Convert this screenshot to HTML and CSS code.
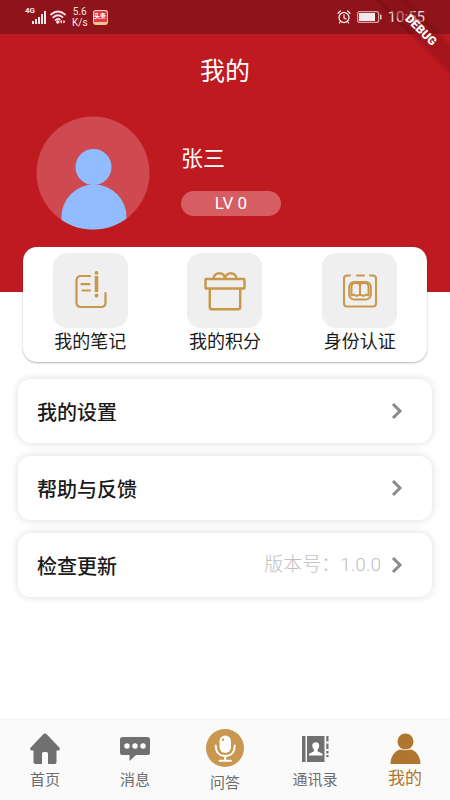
FILE: index.html
```html
<!DOCTYPE html>
<html lang="zh-CN">
<head>
<meta charset="utf-8">
<meta name="viewport" content="width=device-width, initial-scale=1">
<title>我的</title>
<link rel="stylesheet" href="styles.css">
</head>
<body>
<div class="app">
  <div class="status">
    <div class="status-left">
      <svg class="signal" width="22" height="16" viewBox="0 0 22 16" fill="currentColor" aria-hidden="true"><path d="M7 12h2v3H7zM10 10h2v5h-2zM13 8h2v7h-2zM16 5h2v10h-2zM19 2h2v13h-2z"/></svg>
      <span class="net">4G</span>
      <svg width="16" height="16" viewBox="0 0 16 16" fill="none" stroke="currentColor" stroke-width="1.8" stroke-linecap="round" aria-hidden="true"><path d="M1 5.500Q8-.5 15 5.500M3.300 8.300Q8 4.200 12.500 8.100M5.600 11Q8 9 9.800 10.600"/><circle cx="7.800" cy="13" r=".8" fill="currentColor"/><path d="M11.500 12l-.8.8.8.8M13.700 12l.8.8-.8.8" stroke-width="1.200"/></svg>
      <span class="speed"><span>5.6</span><span>K/s</span></span>
      <span class="news"><span>头条</span></span>
    </div>
    <div class="status-right">
      <svg width="14" height="14" viewBox="0 0 14 14" fill="none" stroke="currentColor" stroke-width="1.300" stroke-linecap="round" aria-hidden="true"><circle cx="7" cy="7.500" r="5"/><path d="M7 4.800v3l2 1.200M1 3.300L3.400 1M13 3.300L10.600 1M3.400 11.500l-1 1.500M10.600 11.500l1 1.500"/></svg>
      <svg width="25" height="12" viewBox="0 0 25 12" aria-hidden="true"><rect x=".6" y=".6" width="21" height="10.800" rx="2" fill="none" stroke="#d9a3a6" stroke-width="1.200"/><rect x="2" y="2" width="16" height="8" fill="#f5e8e9"/><rect x="23" y="3.500" width="1.600" height="5" rx=".6" fill="#e8c8ca"/></svg>
      <span class="clock">10:55</span>
    </div>
  </div>
  <div class="ribbon">DEBUG</div>

  <header class="hero">
    <h1>我的</h1>
    <div class="profile">
      <svg class="avatar" width="114" height="114" viewBox="0 0 114 114" role="img" aria-label="头像"><defs><clipPath id="disc"><circle cx="57" cy="57" r="56.500"/></clipPath></defs><circle cx="57" cy="57" r="56.500" fill="#cf4a50"/><g clip-path="url(#disc)" fill="#91bcff"><circle cx="57.500" cy="51" r="18"/><path d="M25.500 114V101a32.500 32.500 0 0 1 65 0v13z"/></g></svg>
      <div class="who">
        <div class="name">张三</div>
        <div class="level">LV 0</div>
      </div>
    </div>
  </header>

  <main>
    <nav class="quick">
      <button type="button"><span class="tile"><svg width="40" height="40" viewBox="0 0 40 40" fill="none" stroke="#c9974a" stroke-width="2.200" stroke-linecap="round" aria-hidden="true"><path d="M20 5H11Q6.500 5 6.500 9.500V31.500Q6.500 36 11 36H31Q35.500 36 35.500 31.500V22M11.500 13.200h8M12.500 19.500h7.500"/><path d="M26.500 5v16" stroke-width="3.600" stroke-linecap="butt"/><g fill="#c9974a" stroke="none"><circle cx="26.500" cy="1.900" r="1.900"/><circle cx="26.500" cy="24.500" r="2"/></g></svg></span><span>我的笔记</span></button>
      <button type="button"><span class="tile"><svg width="42" height="40" viewBox="0 0 42 40" fill="none" stroke="#c9974a" stroke-width="2.400" stroke-linejoin="round" aria-hidden="true"><rect x="1.500" y="8" width="39" height="9.500" rx=".5"/><path d="M5.800 17.500v18.700q0 2 2 2h26.400q2 0 2-2V17.500M9.500 8C9.500 4 12.500 2.300 15.300 2.300S20.800 4 21 8C21.200 4 24 2.300 26.700 2.300S32.500 4 32.500 8"/></svg></span><span>我的积分</span></button>
      <button type="button"><span class="tile"><svg width="36" height="36" viewBox="0 0 36 36" fill="none" stroke="#c9974a" stroke-width="2" stroke-linecap="round" aria-hidden="true"><path d="M8 2.500H5Q2 2.500 2 5.500V30.500Q2 33.500 5 33.500H31Q34 33.500 34 30.500V5.500Q34 2.500 31 2.500H28M15 2.500h7"/><rect x="7.200" y="9" width="21.600" height="17.500" rx="5"/><path d="M18 11v11M9.500 22V13.500q0-3.500 3.500-3.500h2q3 0 3 3 0-3 3-3h2q3.500 0 3.500 3.500V22M9.500 22.500l2.500-1 2.500 1.500 3.500-1.500 3.500 1.500 2.500-1.500 2.500 1" stroke-width="2"/></svg></span><span>身份认证</span></button>
    </nav>
    <section class="menu">
      <button type="button"><span class="label">我的设置</span><svg class="chevron" width="12" height="18" viewBox="0 0 12 18" aria-hidden="true"><path d="M2 2l7 7-7 7"/></svg></button>
      <button type="button"><span class="label">帮助与反馈</span><svg class="chevron" width="12" height="18" viewBox="0 0 12 18" aria-hidden="true"><path d="M2 2l7 7-7 7"/></svg></button>
      <button type="button"><span class="label">检查更新</span><span class="version">版本号：1.0.0</span><svg class="chevron" width="12" height="18" viewBox="0 0 12 18" aria-hidden="true"><path d="M2 2l7 7-7 7"/></svg></button>
    </section>
  </main>

  <nav class="tabs">
    <a href="#home"><svg width="32" height="32" viewBox="0 0 32 32" fill="#707070" aria-hidden="true"><path d="M14.300 1.300q1.700-1.500 3.400 0L30.300 14.500q1.600 3-1 3H27.500V29q0 2-2 2H19V20.500q0-1.500-1.500-1.500h-3q-1.500 0-1.500 1.500V31H6.500q-2 0-2-2V17.500H2.700q-2.600 0-1-3z"/></svg><span>首页</span></a>
    <a href="#messages"><svg width="32" height="32" viewBox="0 0 32 32" aria-hidden="true"><path d="M3.500 4h25q2.500 0 2.500 2.500v13q0 2.500-2.500 2.500H17l-6.500 6V22h-7Q1 22 1 19.500v-13Q1 4 3.500 4z" fill="#707070"/><g fill="#fff"><circle cx="8" cy="13" r="2.700"/><circle cx="16" cy="13" r="2.700"/><circle cx="24" cy="13" r="2.700"/></g></svg><span>消息</span></a>
    <a class="ask" href="#ask"><svg width="38" height="38" viewBox="0 0 38 38" aria-hidden="true"><circle cx="19" cy="19" r="19" fill="#c9974f"/><rect x="13.500" y="6.500" width="11.500" height="17.500" rx="5.700" fill="#fff"/><path d="M9.700 16.500c0 7 4 10.500 9.500 10.500s9.500-3.500 9.500-10.500M19.200 27v4.500M13.500 31.700h11.400" fill="none" stroke="#fff" stroke-width="2" stroke-linecap="round"/><circle cx="17" cy="10.800" r="1.200" fill="#c9974f"/></svg><span>问答</span></a>
    <a href="#contacts"><svg width="32" height="32" viewBox="0 0 32 32" aria-hidden="true"><path d="M3 3h3.500v26H3zM8 3h17.500v26H8zM27.300 3H29.500v5.500h-2.200zM27.300 10.500H29.500V16h-2.200zM27.300 18H29.500v2.500h-2.200zM27.300 22H29.500v2h-2.200z" fill="#707070"/><path d="M10 22.500v-1.700l5-2.600v-1.500q-1.700-1.700-1.700-4.200c0-4.400 6.900-4.400 6.900 0q0 2.500-1.700 4.200v1.500l5 2.600v1.700z" fill="#fff"/></svg><span>通讯录</span></a>
    <a class="active" href="#me"><svg width="32" height="32" viewBox="0 0 32 32" fill="#b0762d" aria-hidden="true"><circle cx="16.500" cy="8.500" r="8"/><path d="M1.500 31C1.500 22 7.500 16.500 12 16.500q4.500 1.500 9 0C25.500 16.500 31.500 22 31.500 31z"/></svg><span>我的</span></a>
  </nav>
</div>
</body>
</html>
```
FILE: styles.css
```css
* { box-sizing: border-box; }

body {
  margin: 0;
  background: #fff;
  color: #1a1a1a;
  font-family: Roboto, "Noto Sans CJK SC", sans-serif;
}

button {
  border: 0;
  margin: 0;
  padding: 0;
  background: none;
  color: inherit;
  font: inherit;
}

svg { display: block; flex: none; }

.app {
  position: relative;
  display: flex;
  flex-direction: column;
  min-height: 100vh;
  overflow: hidden;
}

.status {
  display: flex;
  justify-content: space-between;
  align-items: center;
  height: 34px;
  padding: 0 25px;
  background: #8f131a;
  color: #f6e6e7;
}

.status-left,
.status-right { display: flex; align-items: center; }

.status-left { position: relative; gap: 3px; }
.status-right { gap: 6px; }

.net {
  position: absolute;
  left: 0;
  top: 1px;
  font-size: 8px;
  line-height: 8px;
  font-weight: 700;
}

.speed {
  display: flex;
  flex-direction: column;
  align-items: center;
  margin-left: 3px;
  font-size: 10px;
  line-height: 11px;
}

.news {
  display: flex;
  align-items: center;
  justify-content: center;
  width: 15px;
  height: 15px;
  margin-left: 2px;
  border: 1px solid #f3d6cf;
  border-bottom: 3px solid #f2c590;
  border-radius: 3px;
  background: #e33a40;
  color: #fff;
  font-size: 6px;
  line-height: 8px;
  font-weight: 700;
}

.clock { font-size: 15px; line-height: 20px; }

.ribbon {
  position: absolute;
  top: 22px;
  right: -36px;
  width: 130px;
  background: rgba(140, 18, 24, 0.55);
  box-shadow: 0 0 6px rgba(0, 0, 0, 0.3);
  color: #fff;
  font-size: 12px;
  line-height: 16px;
  font-weight: 900;
  text-align: center;
  transform: rotate(45deg);
}

.hero {
  height: 258px;
  padding: 20px 36px 0;
  background: #c01a21;
  color: #fff;
}

h1 {
  margin: 0;
  font-size: 25px;
  line-height: 36px;
  font-weight: 400;
  text-align: center;
}

.profile {
  display: flex;
  gap: 31px;
  margin-top: 26px;
}

.who { padding-top: 27px; }

.name { font-size: 22px; line-height: 32px; }

.level {
  width: 100px;
  margin-top: 16px;
  border-radius: 13px;
  background: #d65e63;
  font-size: 17px;
  line-height: 25px;
  text-align: center;
}

.quick {
  position: relative;
  display: grid;
  grid-template-columns: repeat(3, 1fr);
  margin: -45px 23px 0;
  padding: 6px 0 7px;
  border-radius: 14px;
  background: #fff;
  box-shadow: 0 1px 2px rgba(0, 0, 0, 0.3);
}

.quick button {
  display: flex;
  flex-direction: column;
  align-items: center;
  gap: 1px;
  font-size: 18px;
  line-height: 26px;
}

.tile {
  display: flex;
  align-items: center;
  justify-content: center;
  width: 75px;
  height: 75px;
  border-radius: 14px;
  background: #efefef;
}

.menu {
  display: flex;
  flex-direction: column;
  gap: 13px;
  margin: 17px 18px;
}

.menu button {
  display: flex;
  align-items: center;
  height: 64px;
  padding: 0 29px 0 19px;
  border-radius: 13px;
  background: #fff;
  box-shadow: 0 0 8px rgba(0, 0, 0, 0.14);
}

.label {
  margin-right: auto;
  padding-top: 4px;
  font-size: 20px;
  line-height: 30px;
  font-weight: 500;
}

.version {
  margin-right: 10px;
  color: #c0c0c0;
  font-size: 19px;
  line-height: 28px;
  font-weight: 300;
}

.chevron { fill: none; stroke: #8b8b8b; stroke-width: 3; }

.tabs {
  display: grid;
  grid-template-columns: repeat(5, 1fr);
  height: 81px;
  margin-top: auto;
  border-top: 1px solid #f3f3f3;
  background: #fafafa;
}

.tabs a {
  display: flex;
  flex-direction: column;
  align-items: center;
  gap: 4px;
  padding-top: 13px;
  color: #6c6c6c;
  font-size: 15px;
  line-height: 22px;
  text-decoration: none;
}

.tabs .ask { gap: 5px; padding-top: 9px; }

.tabs .active {
  gap: 1px;
  color: #b0762d;
  font-size: 17px;
  line-height: 25px;
}
```
